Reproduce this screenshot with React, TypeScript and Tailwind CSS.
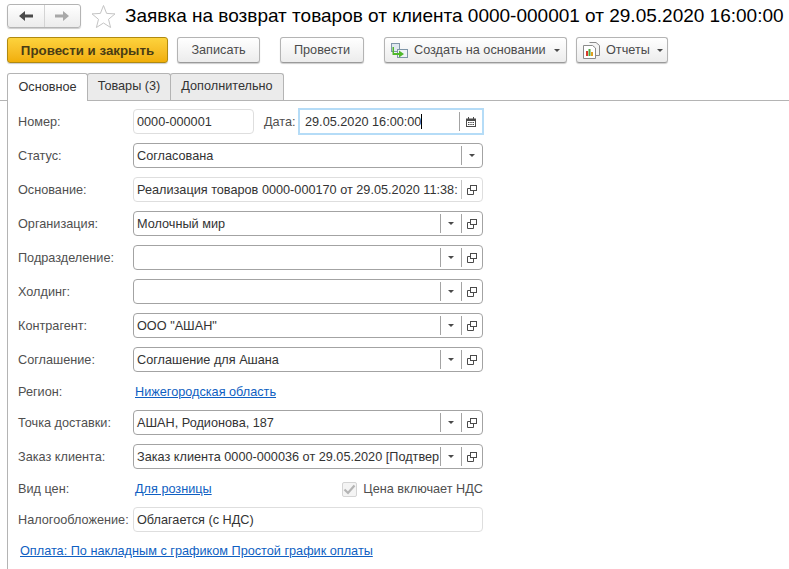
import { ReactNode } from 'react';

// Кнопка панели команд
function Btn({ children, className = '' }: { children: ReactNode; className?: string }) {
  return (
    <button className={`h-[26px] pt-[1px] flex items-center justify-center rounded-[3px] border border-[#b4b4b4] border-b-[#9a9a9a] bg-gradient-to-b from-white to-[#ececec] shadow-[0_1px_1px_rgba(0,0,0,0.2)] text-[#4b4b4b] ${className}`}>
      {children}
    </button>
  );
}

const Caret = () => <span className="w-0 h-0 border-x-[3px] border-x-transparent border-t-[3px] border-t-[#4a4a4a]" />;

const OpenIcon = () => (
  <svg width="10" height="10" viewBox="0 0 10 10" fill="none" stroke="#4a4a4a" strokeWidth="1">
    <rect x="3.5" y="0.5" width="6" height="5" />
    <path d="M3.5 3.5H0.5V9.5H6.5V5.5" />
  </svg>
);

function Row({ label, children, className = '' }: { label: string; children: ReactNode; className?: string }) {
  return (
    <div className={`flex items-center h-[25px] mb-[9px] ${className}`}>
      <div className="w-[115px] shrink-0 pt-[2px] text-[#4f4f4f] whitespace-nowrap">{label}</div>
      {children}
    </div>
  );
}

// Поле ввода с кнопками выбора и открытия
function Field({ value, drop, open, required = true }: { value?: string; drop?: boolean; open?: boolean; required?: boolean }) {
  return (
    <div className={`w-[350px] h-[25px] flex items-stretch rounded-[4px] border bg-white ${required ? 'border-[#a3a3a3]' : 'border-[#dedede]'}`}>
      <div className="flex-1 min-w-0 pl-[3px] leading-[25px] overflow-hidden whitespace-nowrap text-[#333333]">{value}</div>
      {drop && (
        <div className="w-[21px] shrink-0 my-[2px] border-l border-[#a3a3a3] flex items-center justify-center">
          <Caret />
        </div>
      )}
      {open && (
        <div className={`w-[21px] shrink-0 my-[2px] border-l flex items-center justify-center ${required ? 'border-[#a3a3a3]' : 'border-[#c4c4c4]'}`}>
          <OpenIcon />
        </div>
      )}
    </div>
  );
}

export default function App() {
  return (
    <div className="w-[789px] h-[569px] overflow-hidden bg-white text-[12.7px] font-['Liberation_Sans',Arial,sans-serif] text-[#333333]">
      {/* Заголовок */}
      <div className="h-[37px] pl-[7px] pt-[3px] flex items-start">
        <div className="w-[74px] h-[24px] mt-[0.5px] flex rounded-[3px] border border-[#b4b4b4] bg-gradient-to-b from-white to-[#ececec] shadow-[0_1px_1px_rgba(0,0,0,0.2)]">
          <div className="flex-1 border-r border-[#d4d4d4] flex items-center justify-center">
            <svg width="14" height="10" viewBox="0 0 14 10" fill="#4a4a4a"><path d="M0 5L6 0V3.5H14V6.5H6V10Z" /></svg>
          </div>
          <div className="flex-1 flex items-center justify-center">
            <svg width="14" height="10" viewBox="0 0 14 10" fill="#a8a8a8"><path d="M14 5L8 0V3.5H0V6.5H8V10Z" /></svg>
          </div>
        </div>
        <svg className="ml-[10px] mt-[1px]" width="25" height="25" viewBox="0 0 25 25" fill="none" stroke="#c4c4c4" strokeWidth="1">
          <path d="M12.5 1.5L15.6 9.4L24 9.9L17.5 15.3L19.6 23.5L12.5 19L5.4 23.5L7.5 15.3L1 9.9L9.4 9.4Z" />
        </svg>
        <h1 className="ml-[9px] text-[19px] leading-[25px] text-black whitespace-nowrap">
          Заявка на возврат товаров от клиента 0000-000001 от 29.05.2020 16:00:00
        </h1>
      </div>

      {/* Панель команд */}
      <div className="h-[36px] pl-[7px] flex items-start">
        <button className="w-[161px] h-[26px] pt-[1px] rounded-[3px] border border-[#b08a10] bg-gradient-to-b from-[#fdd33c] to-[#f1ae06] shadow-[0_1px_1px_rgba(0,0,0,0.2)] font-bold text-[13.3px] text-[#4a3c14]">
          Провести и закрыть
        </button>
        <Btn className="ml-[9px] w-[83px]">Записать</Btn>
        <Btn className="ml-[20px] w-[84px]">Провести</Btn>
        <Btn className="ml-[20px] w-[183px] pl-[6px] !justify-start">
          <svg width="17" height="16" viewBox="0 0 17 16" fill="none">
            <rect x="0.5" y="0.5" width="8" height="8" fill="#dfe8ef" stroke="#7f96a8" />
            <rect x="6.5" y="6.5" width="10" height="8" fill="#eef3f6" stroke="#7f96a8" />
            <path d="M3 4V10H8V7.5L13 11L8 14.5V12H1.5V4Z" fill="#4fb82c" />
          </svg>
          <span className="ml-[6px]">Создать на основании</span>
          <span className="ml-[8px] flex"><Caret /></span>
        </Btn>
        <Btn className="ml-[9px] w-[92px] pl-[6px] !justify-start">
          <svg width="17" height="17" viewBox="0 0 17 17" fill="none">
            <path d="M6.5 0.5H13L16.5 3.5V13.5H13" fill="#f4f4f4" stroke="#8a8a8a" />
            <path d="M0.5 3.5H9.5L12.5 6V16.5H0.5Z" fill="#ffffff" stroke="#8a8a8a" />
            <rect x="3" y="9" width="2" height="5" fill="#d83a2b" />
            <rect x="5.5" y="7" width="2" height="7" fill="#4fa83c" />
            <rect x="8" y="10" width="2" height="4" fill="#e0a020" />
          </svg>
          <span className="ml-[6px]">Отчеты</span>
          <span className="ml-[7px] flex"><Caret /></span>
        </Btn>
      </div>

      {/* Вкладки */}
      <div className="h-[28px] pl-[7px] flex items-stretch border-b border-[#b4b4b4]">
        <div className="w-[81px] h-[28px] rounded-t-[3px] border border-b-0 border-[#b4b4b4] bg-white flex items-center justify-center relative z-10">Основное</div>
        <div className="w-[84px] -ml-px rounded-t-[3px] border border-b-0 border-[#b4b4b4] bg-[#ebebeb] flex items-center justify-center">Товары (3)</div>
        <div className="w-[114px] -ml-px rounded-t-[3px] border border-b-0 border-[#b4b4b4] bg-[#ebebeb] flex items-center justify-center">Дополнительно</div>
      </div>

      {/* Форма */}
      <div className="ml-[7px] h-[468px] border-l border-[#b4b4b4] pl-[10px] pt-[8px]">
        <Row label="Номер:">
          <div className="w-[121px] h-[25px] rounded-[4px] border border-[#dedede] pl-[3px] leading-[25px]">0000-000001</div>
          <div className="ml-[10px] w-[34px] pt-[2px] text-[#4f4f4f]">Дата:</div>
          <div className="w-[186px] h-[27px] flex border-2 border-[#b5dcf7] bg-white">
            <div className="flex-1 pl-[5px] leading-[25px] flex whitespace-nowrap">
              29.05.2020 16:00:00<span className="w-px h-[15px] mt-[4px] bg-black" />
            </div>
            <div className="w-[23px] my-[2px] border-l border-[#a3a3a3] flex items-center justify-center">
              <svg width="10" height="10" viewBox="0 0 10 10" fill="#4a4a4a">
                <path d="M0 1.5H2V0H3V1.5H7V0H8V1.5H10V10H0ZM1 4V9H9V4Z" />
                <path d="M2 5H3.5V6H2ZM4.3 5H5.7V6H4.3ZM6.5 5H8V6H6.5ZM2 7H3.5V8H2ZM4.3 7H5.7V8H4.3ZM6.5 7H8V8H6.5Z" />
              </svg>
            </div>
          </div>
        </Row>
        <Row label="Статус:"><Field value="Согласована" drop /></Row>
        <Row label="Основание:"><Field value="Реализация товаров 0000-000170 от 29.05.2020 11:38:" open required={false} /></Row>
        <Row label="Организация:"><Field value="Молочный мир" drop open /></Row>
        <Row label="Подразделение:"><Field drop open /></Row>
        <Row label="Холдинг:"><Field drop open /></Row>
        <Row label="Контрагент:"><Field value='ООО "АШАН"' drop open /></Row>
        <Row label="Соглашение:"><Field value="Соглашение для Ашана" drop open /></Row>
        <Row label="Регион:" className="!h-[22px] !mb-[7px]">
          <a className="ml-[2px] pt-[2px] text-[#0f5fc2] underline">Нижегородская область</a>
        </Row>
        <Row label="Точка доставки:"><Field value="АШАН, Родионова, 187" drop open /></Row>
        <Row label="Заказ клиента:"><Field value="Заказ клиента 0000-000036 от 29.05.2020 [Подтвер" drop open /></Row>
        <Row label="Вид цен:" className="!h-[22px] !mb-[7px]">
          <div className="w-[350px] pt-[2px] flex items-center justify-between">
            <a className="ml-[2px] text-[#0f5fc2] underline">Для розницы</a>
            <div className="flex items-center text-[#4f4f4f]">
              <span className="w-[15px] h-[15px] rounded-[2px] border border-[#d4d4d4] bg-[#f4f4f4] flex items-center justify-center">
                <svg width="13" height="11" viewBox="0 0 13 11" fill="none" stroke="#b4b4b4" strokeWidth="2.2"><path d="M1.5 5.5L5 9L11.5 1.5" /></svg>
              </span>
              <span className="ml-[6px] whitespace-nowrap">Цена включает НДС</span>
            </div>
          </div>
        </Row>
        <Row label="Налогообложение:">
          <div className="w-[350px] h-[25px] rounded-[4px] border border-[#dedede] pl-[3px] leading-[25px]">Облагается (с НДС)</div>
        </Row>
        <a className="block ml-[2px] mt-[10px] text-[#0f5fc2] underline whitespace-nowrap">Оплата: По накладным с графиком Простой график оплаты</a>
      </div>
    </div>
  );
}
